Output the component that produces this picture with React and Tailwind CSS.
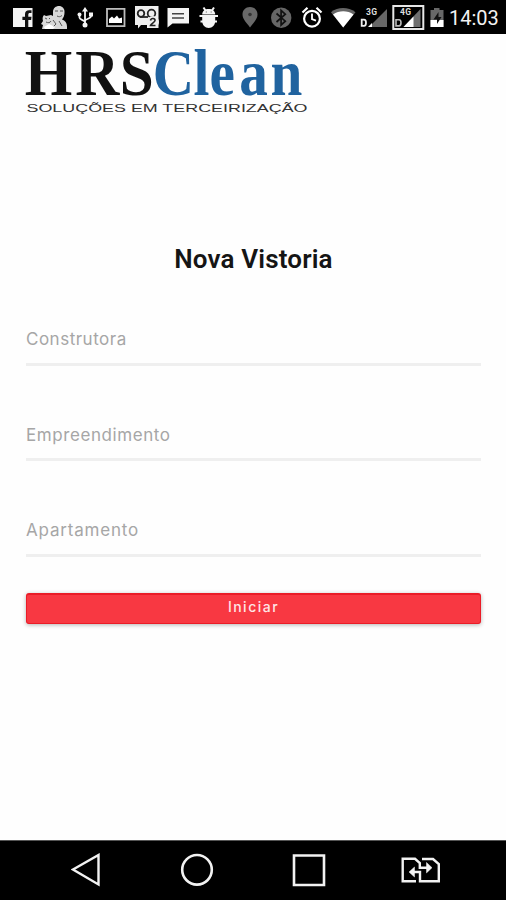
import React, { useState } from 'react'

const fields = [
  { id: 'construtora', label: 'Construtora', tracking: 'tracking-[0.5px]' },
  { id: 'empreendimento', label: 'Empreendimento', tracking: 'tracking-[0.58px]' },
  { id: 'apartamento', label: 'Apartamento', tracking: 'tracking-[0.8px]' },
]

// Every status icon is drawn in the coordinates of the bar, x is its left edge
function Icon({ x, w, children }) {
  return (
    <svg width={w} height="34" viewBox={`${x} 0 ${w} 34`} className="shrink-0" fill="none">
      {children}
    </svg>
  )
}

function StatusBar() {
  return (
    <header className="flex h-[34px] shrink-0 items-center bg-black pl-2 text-[#f4f4f4]">
      {/* Facebook */}
      <Icon x={8} w={30}>
        <path d="M13 8h19.500v19h-19.500z" fill="currentColor" />
        <path d="M25 27v-7h-2.600v-3.200H25v-2.500c0-2.800 1.400-4 4.200-4h2.300v2.800h-1.600c-1.200 0-1.600.5-1.600 1.600v2.100h3.200l-.4 3.200h-2.800v7z" fill="#111" />
      </Icon>
      {/* People */}
      <Icon x={38} w={34}>
        <path d="M53 12c0-4 3-6 6-6s6 2.500 5.500 6.500c0 3-1 5-2.500 7 3 1 5 3.500 5 7V29H42l1-4-2-1 2-3c-1-3 0-5 1-6l2 1 5-1 2 1z" fill="#d8d8d8" />
        <path d="M55 11h3M60 11h3M57 16c2 1 3 1 5-.5M45 18l2 1M50 18l-1 1M46 22c2 1 4 1 5-1M53 20l3 4-4 4M59 21l3 5" stroke="#555" strokeWidth="1" />
        <path d="M44 27l5-3 6 3-2 2h-8z" fill="#fff" />
      </Icon>
      {/* USB */}
      <Icon x={72} w={27}>
        <path d="M85 9v15M79.500 15v2.800c0 2 5.500 2.500 5.500 4.200M91 14v2.500c0 2-6 2.500-6 4.500" stroke="currentColor" strokeWidth="1.800" />
        <path d="M85 7l3 4.500h-6z" fill="currentColor" />
        <circle cx="79.500" cy="14.500" r="2" fill="currentColor" />
        <path d="M89 12.500h4v4h-4z" fill="currentColor" />
        <circle cx="85" cy="25" r="2.500" fill="currentColor" />
      </Icon>
      {/* Picture */}
      <Icon x={99} w={31}>
        <path d="M107 8.800h17.500v17.400H107z" stroke="#bdbdbd" strokeWidth="1.800" />
        <path d="M109 23v-4l3-2.500 2 2 3-3 2 3 3-1V23z" fill="#fff" />
      </Icon>
      {/* Voicemail */}
      <Icon x={130} w={34}>
        <path d="M135 6h23.500v22H147v-3h-6l-3 3.500V25h-3z" fill="#eee" />
        <circle cx="141" cy="13.500" r="3.300" stroke="#222" strokeWidth="1.800" />
        <circle cx="151.500" cy="13.500" r="3.800" stroke="#222" strokeWidth="1.800" />
        <path d="M140 17h8" stroke="#222" strokeWidth="1.800" />
        <circle cx="153" cy="22" r="6" fill="#eee" />
        <path d="M150.500 20.500c.5-3 5-2.500 4.500.2-.3 1.800-4 3-4.500 4.800h5" stroke="#222" strokeWidth="1.600" />
      </Icon>
      {/* Message */}
      <Icon x={164} w={30}>
        <path d="M167.500 8h21.500v15.500h-16.500l-5 4z" fill="currentColor" />
        <path d="M172 13.800h12M172 18h12" stroke="#444" strokeWidth="1.500" />
      </Icon>
      {/* Android bug */}
      <Icon x={194} w={38}>
        <path d="M203.500 7.500l2 3M214 7.500l-2 3M199.500 16h18.500M200.500 21.500h16.500" stroke="currentColor" strokeWidth="2" />
        <path d="M202.200 14.500c0-3.500 2.700-5.500 6.500-5.500s6.500 2 6.500 5.500z" fill="currentColor" />
        <path d="M202.200 15h13v6c0 4-2.800 7-6.500 7s-6.500-3-6.500-7z" fill="currentColor" />
        <path d="M205.800 12h1M210.700 12h1" stroke="#555" strokeWidth="1" />
      </Icon>
      {/* Location */}
      <Icon x={232} w={34}>
        <path d="M250 7c-4.500 0-7.500 3.200-7.500 7.500 0 5 4.500 8.500 7.500 13 3-4.500 7.500-8 7.500-13 0-4.300-3-7.500-7.500-7.500z" fill="#696969" />
        <circle cx="250" cy="14.500" r="1.800" fill="#333" />
      </Icon>
      {/* Bluetooth */}
      <Icon x={266} w={31}>
        <circle cx="281.200" cy="17.700" r="10.200" fill="#666" />
        <path d="M276.500 13.500l8.800 7.700-4.200 3.800V10.500l4.200 3.700-8.800 7.800" stroke="#111" strokeWidth="1.700" />
      </Icon>
      {/* Alarm */}
      <Icon x={297} w={30}>
        <circle cx="312" cy="18.700" r="7.900" stroke="#fff" strokeWidth="2.200" />
        <path d="M312 13.500v5.700l4 1.500" stroke="#fff" strokeWidth="1.800" />
        <path d="M302.500 12.500l5-4.800M321.500 12.500l-5-4.800" stroke="#fff" strokeWidth="2.200" />
      </Icon>
      {/* Wifi */}
      <Icon x={327} w={31}>
        <path d="M331 12.300c7-5.600 17-5.600 24.500 0L343.200 27.500z" fill="#666" />
        <path d="M333 14.500c6-4.200 14.500-4.200 20.500 0L343.200 27.500z" fill="#fff" />
      </Icon>
      {/* Signal of the first SIM */}
      <Icon x={358} w={31}>
        <path d="M387 9v18h-18z" fill="#676767" />
        <text x="366" y="15" fontFamily="Roboto, sans-serif" fontSize="8.500" fontWeight="700" fill="#ddd" textLength="11">3G</text>
        <path d="M361.700 19.700h2.300q2 0 2 3t-2 3.200h-2.300z" stroke="#eee" strokeWidth="1.800" />
        <path d="M368 27h4v-4z" fill="#fff" />
      </Icon>
      {/* Signal of the second SIM */}
      <Icon x={389} w={38}>
        <path d="M393.300 6h30v23h-30z" stroke="#e6e6e6" strokeWidth="2" />
        <path d="M420.500 9v18h-17z" fill="#707070" />
        <path d="M413.500 16.500V27h-10z" fill="#fff" />
        <text x="400" y="15" fontFamily="Roboto, sans-serif" fontSize="8.500" fontWeight="700" fill="#ddd" textLength="11">4G</text>
        <path d="M396 19.700h3q2 0 2 3t-2 3.200h-3z" stroke="#bbb" strokeWidth="1.600" />
      </Icon>
      {/* Battery */}
      <Icon x={427} w={21}>
        <path d="M434 8h5.500v2h4v17h-13V10h3.500z" fill="#686868" />
        <path d="M430.500 20h13v7h-13z" fill="#fff" />
        <path d="M438.500 12l-5 7.500h3.500v4.500l4.500-7h-3z" fill="#111" />
      </Icon>
      <span className="ml-px pt-0.5 font-[Roboto,sans-serif] text-[20px] leading-none text-[#f2f2f2]">14:03</span>
    </header>
  )
}

function Logo() {
  return (
    <svg width="290" height="84" viewBox="20 34 290 84" className="-ml-1.5 block overflow-visible">
      <g fontFamily="'Liberation Serif', serif" fontSize="65" fontWeight="700">
        <text x="26.300 80 127.500" y="95" fill="#111" transform="scale(0.94 1)">HRS</text>
        <text x="173.500 220 238 272 307.500" y="95" fill="#20639f" transform="scale(0.88 1)">Clean</text>
      </g>
      <text x="26.500" y="112" fill="#333" fontFamily="'Liberation Sans', sans-serif" fontSize="11.200" textLength="281" lengthAdjust="spacingAndGlyphs">SOLUÇÕES EM TERCEIRIZAÇÃO</text>
    </svg>
  )
}

function NavBar() {
  return (
    <nav className="flex h-[60px] shrink-0 items-center border-t border-[#555] bg-black pb-px pl-[71px] text-[#f2f2f2]">
      <svg width="30" height="34" viewBox="71 853 30 34" fill="none" stroke="currentColor" strokeWidth="2.400">
        <path d="M73 869.500L98.500 855v29.500z" />
      </svg>
      <svg width="34" height="34" viewBox="180 853 34 34" fill="none" stroke="currentColor" strokeWidth="2.600" className="ml-[79px]">
        <circle cx="197" cy="869.800" r="14.800" />
      </svg>
      <svg width="36" height="34" viewBox="291 853 36 34" fill="none" stroke="currentColor" strokeWidth="2.600" className="ml-[77px]">
        <path d="M294 855.500h30V885h-30z" />
      </svg>
      {/* Switch between the SIM cards */}
      <svg width="42" height="34" viewBox="400 853 42 34" fill="none" stroke="currentColor" strokeWidth="2.400" className="ml-[73px]">
        <path d="M416 881.300h-13.300v-22.500H415l4.800 4.200v4.800h9M422 859h11l5.800 5v17.300H420V872h-9" />
        <path d="M426.500 862.500l5.500 5.200-5.500 5.200zM414.500 867l-5.500 5 5.500 5z" fill="currentColor" strokeWidth="0.500" />
      </svg>
    </nav>
  )
}

export default function App() {
  const [values, setValues] = useState({})

  return (
    <div className="flex h-[900px] w-full max-w-[506px] flex-col bg-[#fefefe]">
      <StatusBar />
      <main className="flex flex-1 flex-col pl-[26px] pr-[25px]">
        <Logo />
        <h1 className="mt-[125px] text-center font-[Roboto,sans-serif] text-[26px] font-semibold leading-8 tracking-[0.15px] text-[#151515]">
          Nova Vistoria
        </h1>
        <form className="mt-[45px] flex flex-col" onSubmit={e => e.preventDefault()}>
          {fields.map(f => (
            <input
              key={f.id}
              type="text"
              placeholder={f.label}
              value={values[f.id] || ''}
              onChange={e => setValues({ ...values, [f.id]: e.target.value })}
              className={`mb-[50px] h-[45.500px] border-b-[3px] border-[#efefef] pb-1 font-[Inter,sans-serif] text-[17px] text-[#777] outline-none placeholder:text-[#a6a6a6] ${f.tracking}`}
            />
          ))}
          <button
            type="submit"
            className="-mt-[14px] h-[31px] rounded-[3px] border border-t-2 border-[#ea1c27] bg-[#f83842] pb-[3px] font-[Inter,sans-serif] text-sm font-medium leading-none tracking-[1.500px] text-[#ffe5e6] shadow-[0_1px_4px_rgba(0,0,0,0.3)]"
          >
            Iniciar
          </button>
        </form>
      </main>
      <NavBar />
    </div>
  )
}
